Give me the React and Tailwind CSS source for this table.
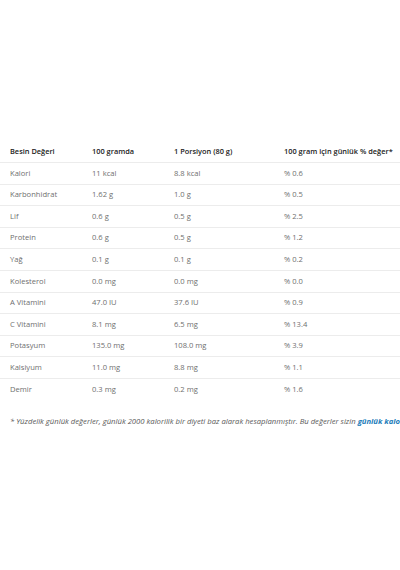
import React from "react";

const rows = [
  ["Kalori", "11 kcal", "8.8 kcal", "% 0.6"],
  ["Karbonhidrat", "1.62 g", "1.0 g", "% 0.5"],
  ["Lif", "0.6 g", "0.5 g", "% 2.5"],
  ["Protein", "0.6 g", "0.5 g", "% 1.2"],
  ["Yağ", "0.1 g", "0.1 g", "% 0.2"],
  ["Kolesterol", "0.0 mg", "0.0 mg", "% 0.0"],
  ["A Vitamini", "47.0 IU", "37.6 IU", "% 0.9"],
  ["C Vitamini", "8.1 mg", "6.5 mg", "% 13.4"],
  ["Potasyum", "135.0 mg", "108.0 mg", "% 3.9"],
  ["Kalsiyum", "11.0 mg", "8.8 mg", "% 1.1"],
  ["Demir", "0.3 mg", "0.2 mg", "% 1.6"],
];

export default function App() {
  return (
    <div
      className="w-[400px] h-[570px] bg-white overflow-hidden"
      style={{ fontFamily: '"Open Sans", "Noto Sans", sans-serif' }}
    >
      <div className="pt-[141px]">
        <div className="grid grid-cols-[92px_82px_110px_1fr] h-[22px] items-center border-b border-[#ececec] text-[7.4px] font-semibold text-[#222]">
          <div className="pl-[10px] whitespace-nowrap">Besin Değeri</div>
          <div className="whitespace-nowrap">100 gramda</div>
          <div className="whitespace-nowrap">1 Porsiyon (80 g)</div>
          <div className="whitespace-nowrap">100 gram için günlük % değer*</div>
        </div>
        {rows.map((r, i) => (
          <div
            key={r[0]}
            className={`grid grid-cols-[92px_82px_110px_1fr] h-[21.6px] items-center text-[7.6px] text-[#6f6f6f] ${
              i < rows.length - 1 ? "border-b border-[#ececec]" : ""
            }`}
          >
            <div className="pl-[10px] whitespace-nowrap">{r[0]}</div>
            <div className="whitespace-nowrap">{r[1]}</div>
            <div className="whitespace-nowrap">{r[2]}</div>
            <div className="whitespace-nowrap">{r[3]}</div>
          </div>
        ))}
        <div className="mt-[15px] pl-[10px] whitespace-nowrap text-[7.7px] italic text-[#5a5a5a]">
          * Yüzdelik günlük değerler, günlük 2000 kalorilik bir diyeti baz alarak hesaplanmıştır. Bu değerler sizin{" "}
          <span className="font-bold text-[#1a7bb9]">günlük kalori ihtiyacınıza</span> göre değişebilir.
        </div>
      </div>
    </div>
  );
}
